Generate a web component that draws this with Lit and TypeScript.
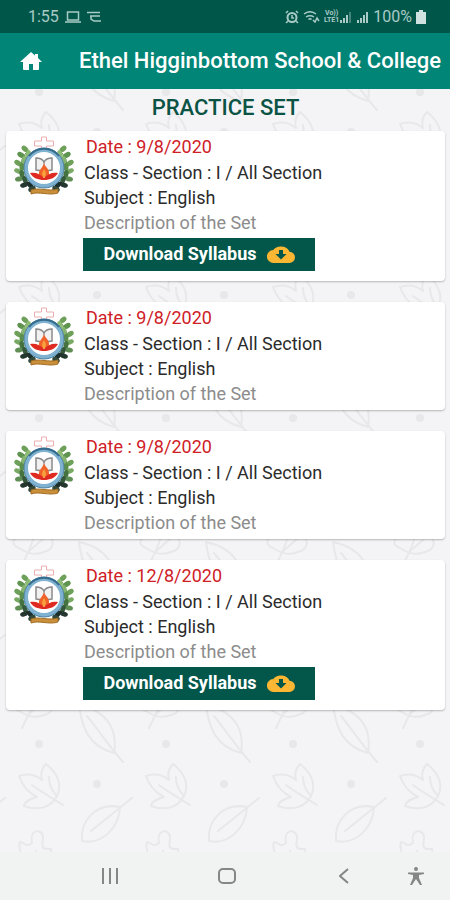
import { LitElement, html, css, svg, nothing } from "lit";
import { customElement, property } from "lit/decorators.js";

interface PracticeSet {
  date: string;
  section: string;
  subject: string;
  description: string;
  download: boolean;
}

const SETS: PracticeSet[] = [
  { date: "9/8/2020", section: "I / All Section", subject: "English", description: "Description of the Set", download: true },
  { date: "9/8/2020", section: "I / All Section", subject: "English", description: "Description of the Set", download: false },
  { date: "9/8/2020", section: "I / All Section", subject: "English", description: "Description of the Set", download: false },
  { date: "12/8/2020", section: "I / All Section", subject: "English", description: "Description of the Set", download: true },
];

@customElement("school-crest")
class SchoolCrest extends LitElement {
  static styles = css`
    :host { display: block; }
    svg { display: block; }
  `;
  render() {
    // One laurel branch, mirrored for the right side.
    const leaves = [
      [11, 13, -50, "#6fa05a"], [14, 18, 20, "#8dbb74"], [7, 19, -60, "#5f9450"], [10, 24, 10, "#86b56f"],
      [4, 27, -60, "#6fa05a"], [8, 31, 0, "#5c8f4c"], [4, 35, -70, "#79a965"], [8, 38, -10, "#44733f"],
      [5, 43, -100, "#5f8f55"], [11, 44, -20, "#35573a"], [10, 49, -110, "#24382f"], [16, 49, -40, "#1d2f2a"],
      [18, 53, -120, "#31483a"],
    ] as const;
    const branch = svg`
      <path d="M14 15C5 23 2 40 22 54" fill="none" stroke="#5a8a4c" stroke-width="1"/>
      ${leaves.map(([x, y, r, c]) => svg`<ellipse cx=${x} cy=${y} rx="2.5" ry="4" fill=${c} transform="rotate(${r} ${x} ${y})"/>`)}
    `;
    return html`
      <svg width="60" height="60" viewBox="0 0 60 60" role="img" aria-label="School crest">
        ${branch}
        <g transform="translate(60 0) scale(-1 1)">${branch}</g>
        <path d="M27.500 1h5v4h7v5h-7v4h-5v-4h-7v-5h7z" fill="#fff" stroke="#ecaeb0" stroke-width="1"/>
        <circle cx="30" cy="32" r="18" fill="#fff" stroke="#7fb2d0" stroke-width="4"/>
        <circle cx="30" cy="32" r="20" fill="none" stroke="#4d82a2" stroke-width="1"/>
        <path d="M15 20a19 19 0 0 1 30 0" fill="none" stroke="#356c8d" stroke-width="2"/>
        <path d="M30 26c-2-4-5-4-8-4v12c4 0 6 1 8 3 2-2 4-3 8-3v-12c-3 0-6 0-8 4z" fill="#f1f1f1" stroke="#8a8a8a" stroke-width="1.500"/>
        <path d="M30 26v10" stroke="#8a8a8a" stroke-width="1"/>
        <path d="M30 27c1 4 6 6 5 12-1 3-9 3-10 0-1-5 4-7 5-12z" fill="#f0622a"/>
        <path d="M16 37c6-1 10 1 14 5 4-4 8-6 14-5-3 5-8 7-14 7s-11-2-14-7z" fill="#df2a22"/>
        <path d="M30 33c2 3 3 6 0 9-3-3-2-6 0-9z" fill="#f8a13c"/>
        <path d="M17 54c8-3 18 2 27-1v4c-9 3-19-2-27 1z" fill="#c98f3a" stroke="#a36d24" stroke-width="1"/>
      </svg>
    `;
  }
}

@customElement("practice-card")
class PracticeCard extends LitElement {
  @property({ attribute: false }) item!: PracticeSet;

  static styles = css`
    :host { display: block; }
    .card {
      display: flex;
      gap: 9px;
      padding: 3px 8px 4px;
      background: #fff;
      border-radius: 4px;
      box-shadow: 0 1px 2px rgba(0, 0, 0, 0.26);
      font-size: 18px;
      line-height: 25px;
      color: #2b2b2b;
    }
    .crest { flex: none; margin-top: 2px; }
    .body { min-width: 0; flex: 1; }
    p { margin: 0; padding-left: 1px; }
    .date { color: #cf2026; margin-bottom: 1px; padding-left: 3px; }
    .desc { color: #8c8c8c; }
    .download {
      display: flex;
      align-items: center;
      justify-content: center;
      gap: 10px;
      width: 232px;
      height: 33px;
      margin: 3px 0 6px;
      padding: 0 0 2px;
      border: 0;
      background: #02574a;
      color: #fff;
      font: 700 18px/24px Roboto, sans-serif;
    }
  `;

  render() {
    const s = this.item;
    return html`
      <article class="card">
        <school-crest class="crest"></school-crest>
        <div class="body">
          <p class="date">Date : ${s.date}</p>
          <p>Class - Section : ${s.section}</p>
          <p>Subject : ${s.subject}</p>
          <p class="desc">${s.description}</p>
          ${s.download
            ? html`<button class="download" type="button">
                <span>Download Syllabus</span>
                <svg width="28" height="18" viewBox="0 0 28 18" aria-hidden="true">
                  <path d="M22.500 6.800A9 7.500 0 0 0 6.200 5 6.500 6.300 0 0 0 7 18h15a5.700 5.600 0 0 0 .5-11.200z" fill="#fbb634"/>
                  <path d="M12 5h4v4h3.500L14 14.500 8.500 9H12z" fill="#02574a"/>
                </svg>
              </button>`
            : nothing}
        </div>
      </article>
    `;
  }
}

@customElement("app-root")
class AppRoot extends LitElement {
  static styles = css`
    :host {
      display: flex;
      flex-direction: column;
      min-height: 100vh;
      font-family: Roboto, sans-serif;
      background: #f4f3f6;
    }
    svg { display: block; flex: none; }
    .status {
      display: flex;
      align-items: center;
      height: 33px;
      padding: 0 24px 0 28px;
      background: #01564a;
      color: #a9cbc5;
      font-size: 16px;
      line-height: 20px;
    }
    .status .left { display: flex; align-items: center; gap: 6px; flex: 1; }
    .status .right { display: flex; align-items: center; gap: 4px; }
    .network { display: flex; align-items: center; gap: 1px; }
    .volte { font-size: 7px; line-height: 7px; font-weight: 700; text-align: center; }
    .volte span { display: block; }
    .bar {
      display: flex;
      align-items: center;
      gap: 37px;
      height: 56px;
      padding: 0 12px 0 20px;
      background: #018577;
      color: #fff;
    }
    .home { display: block; color: #fff; }
    .bar h1 { margin: 0; font-size: 22px; line-height: 28px; font-weight: 500; white-space: nowrap; }
    main { position: relative; flex: 1; padding: 0 5px 20px 6px; }
    .pattern { position: absolute; inset: 0; width: 100%; height: 100%; }
    .content { position: relative; }
    h2 { margin: 0; padding-bottom: 4px; text-align: center; font-size: 22px; line-height: 38px; font-weight: 500; color: #0b5445; }
    .list { display: grid; gap: 21px; }
    nav {
      display: grid;
      grid-template-columns: repeat(3, 1fr) 28px;
      height: 48px;
      padding: 0 20px 0 51px;
      background: #f1f2f2;
    }
    nav button {
      display: grid;
      place-items: center;
      padding: 0;
      border: 0;
      background: none;
      color: #858686;
    }
  `;

  private pattern() {
    const longLeaf = svg`
      <path d="M79 -26C82 -4 88 15 114 22C118 -2 107 -20 79 -26z"/>
      <path d="M87 -15C97 -3 108 14 123 31"/>
    `;
    const roundLeaf = svg`
      <path d="M82 110C80 90 96 71 120 76C119 97 102 114 82 110z"/>
      <path d="M91 100L132 67"/>
    `;
    return html`
      <svg class="pattern" aria-hidden="true">
        <defs>
          <pattern id="leaves" width="127" height="163" patternUnits="userSpaceOnUse" y="-10">
            <g fill="none" stroke="#e8e7ea" stroke-width="2" stroke-linejoin="round" stroke-linecap="round">
              <path d="M19 45C28 42 36 44 42 49C40 42 42 37 46 33C59 43 62 55 57 65C51 77 37 80 24 75C25 70 30 68 37 66C29 62 22 54 19 45z"/>
              <path d="M32 54C40 60 50 66 63 74M57 65C52 60 49 53 49 46"/>
              ${longLeaf}
              <g transform="translate(0 163)">${longLeaf}</g>
              ${roundLeaf}
              <g transform="translate(-127 0)">${roundLeaf}</g>
              <path d="M32 112C29 98 42 97 43 106C43 113 39 119 51 118C53 124 47 126 50 132C55 137 53 145 44 147C34 151 27 148 19 143C9 139 14 133 20 130C24 121 17 118 20 111C24 111 26 117 32 112z"/>
              <path d="M36 120C35 134 28 148 22 160M28 147L43 134"/>
            </g>
            <circle cx="39" cy="13" r="4" fill="#e8e7ea"/>
            <circle cx="97" cy="53" r="4" fill="#e8e7ea"/>
          </pattern>
        </defs>
        <rect width="100%" height="100%" fill="url(#leaves)"/>
      </svg>
    `;
  }

  render() {
    return html`
      <div class="status">
        <div class="left">
          <span>1:55</span>
          <svg width="16" height="12" viewBox="0 0 16 12" fill="none" stroke="currentColor" stroke-width="1.500">
            <path d="M2.500 1h11v8h-11zM0 11h16"/>
          </svg>
          <svg width="14" height="12" viewBox="0 0 14 12" fill="none" stroke="currentColor" stroke-width="1.500">
            <path d="M0 1.500h13M3 5h10M4 5v3l3 2h7"/>
          </svg>
        </div>
        <div class="right">
          <svg width="14" height="14" viewBox="0 0 14 14" fill="none" stroke="currentColor">
            <circle cx="7" cy="7.500" r="4.500" stroke-width="2"/>
            <path d="M7 5v3h2M1 3l2-2M13 3l-2-2M3 11l-2 2M11 11l2 2" stroke-width="1.500"/>
          </svg>
          <svg width="17" height="12" viewBox="0 0 17 12" fill="none" stroke="currentColor" stroke-width="1.500">
            <path d="M1 3c4-3 8-3 12 0M3 6c3-2 5-2 8 0M5.500 8.500c1-1 2-1 3 0"/>
            <path d="M10 9l2 2 2-4 2 3"/>
          </svg>
          <div class="network">
            <div class="volte"><span>Vo))</span><span>LTE1</span></div>
            <svg width="29" height="13" viewBox="0 0 29 13" fill="currentColor">
              <path d="M0 10h2v3H0zM3 8h2v5H3zM6 5h2v8H6z"/>
              <path d="M9 2h2v11H9z" opacity=".4"/>
              <path d="M17 10h2v3h-2zM20 8h2v5h-2zM23 5h2v8h-2zM26 2h2v11h-2z"/>
            </svg>
          </div>
          <span>100%</span>
          <svg width="10" height="14" viewBox="0 0 10 14" fill="#cfe2df"><path d="M3 0h4v2h3v12H0V2h3z"/></svg>
        </div>
      </div>
      <header class="bar">
        <a class="home" href="#" aria-label="Home">
          <svg width="22" height="18" viewBox="0 0 22 18" fill="currentColor">
            <path d="M11 0L0 10h3v7q0 1 1 1h5v-6h4v6h5q1 0 1-1v-7h3L18 6V2h-3v1.500z"/>
          </svg>
        </a>
        <h1>Ethel Higginbottom School &amp; College</h1>
      </header>
      <main>
        ${this.pattern()}
        <div class="content">
          <h2>PRACTICE SET</h2>
          <div class="list">
            ${SETS.map((s) => html`<practice-card .item=${s}></practice-card>`)}
          </div>
        </div>
      </main>
      <nav>
        <button type="button" aria-label="Recent apps">
          <svg width="18" height="16" viewBox="0 0 18 16" fill="none" stroke="currentColor" stroke-width="2"><path d="M2 0v16M9 0v16M16 0v16"/></svg>
        </button>
        <button type="button" aria-label="Home screen">
          <svg width="18" height="16" viewBox="0 0 18 16" fill="none" stroke="currentColor" stroke-width="2"><rect x="1" y="1" width="16" height="14" rx="4"/></svg>
        </button>
        <button type="button" aria-label="Back">
          <svg width="10" height="16" viewBox="0 0 10 16" fill="none" stroke="currentColor" stroke-width="2"><path d="M9 1L1 8l8 7"/></svg>
        </button>
        <button type="button" aria-label="Accessibility">
          <svg width="16" height="18" viewBox="0 0 16 18" fill="currentColor">
            <circle cx="8" cy="2" r="2"/>
            <path d="M0 5.500h16v1.500l-5 1v3l3 7h-2l-4-6-4 6H2l3-7V8L0 7z"/>
          </svg>
        </button>
      </nav>
    `;
  }
}
